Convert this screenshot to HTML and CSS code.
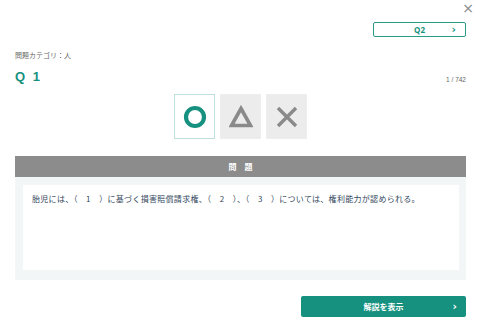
FILE: index.html
```html
<!DOCTYPE html>
<html lang="ja">

<head>
    <meta charset="UTF-8">
    <meta name="viewport" content="width=device-width, initial-scale=1.0">
    <title>問題</title>
    <link rel="stylesheet" href="styles.css">
</head>

<body>
    <div class="modal">
        <div class="close-row">
            <span class="close">&times;</span>
        </div>
        <div class="next-row">
            <a class="next-btn" href="#"><span>Q2</span><span class="chev">&rsaquo;</span></a>
        </div>
        <div class="category">問題カテゴリ：人</div>
        <div class="q-head">
            <h1>Q 1</h1>
            <span class="count">1 / 742</span>
        </div>

        <div class="answers">
            <button class="ans selected">
                <svg width="24" height="24" viewBox="0 0 24 24">
                    <circle cx="12" cy="12" r="9" fill="none" stroke="#17917f" stroke-width="4.2" />
                </svg>
            </button>
            <button class="ans">
                <svg width="24" height="24" viewBox="0 0 24 24">
                    <path d="M12 3.5 L21.5 20.5 H2.5 Z" fill="none" stroke="#8a8a8a" stroke-width="3.6" stroke-linejoin="miter" />
                </svg>
            </button>
            <button class="ans">
                <svg width="24" height="24" viewBox="0 0 24 24">
                    <path d="M3 3 L21 21 M21 3 L3 21" stroke="#8a8a8a" stroke-width="3.4" />
                </svg>
            </button>
        </div>

        <div class="question">
            <div class="q-title">問　題</div>
            <div class="q-body">
                <div class="q-text">胎児には、（　1　）に基づく損害賠償請求権、（　2　）、（　3　）については、権利能力が認められる。</div>
            </div>
        </div>

        <div class="footer">
            <a class="explain-btn" href="#"><span>解説を表示</span><span class="chev">&rsaquo;</span></a>
        </div>
    </div>
</body>

</html>
```

FILE: styles.css
```css
body {
    margin: 0;
    font-family: "Noto Sans CJK JP", "Noto Sans", sans-serif;
    background-color: #fff;
    color: #555;
}

.modal {
    width: 451px;
    padding: 0 14px 0 15px;
}

.close-row {
    display: flex;
    justify-content: flex-end;
    height: 22px;
}

.close {
    font-family: "DejaVu Sans", sans-serif;
    font-size: 14px;
    line-height: 16px;
    color: #888;
    margin-right: -8px;
}

.next-row {
    display: flex;
    justify-content: flex-end;
}

.next-btn {
    width: 91px;
    height: 13px;
    border: 1px solid #2a9a88;
    border-radius: 2px;
    display: flex;
    align-items: center;
    justify-content: center;
    position: relative;
    text-decoration: none;
    color: #17917f;
    font-family: "Open Sans", sans-serif;
    font-weight: 700;
    font-size: 8px;
}

.chev {
    position: absolute;
    right: 9px;
    top: 50%;
    transform: translateY(-54%);
    font-family: "DejaVu Sans", sans-serif;
    font-weight: 700;
    font-size: 11px;
}

.category {
    margin-top: 13px;
    font-size: 7px;
    line-height: 10px;
    color: #666;
}

.q-head {
    display: flex;
    justify-content: space-between;
    align-items: flex-end;
    margin-top: 9px;
}

.q-head h1 {
    margin: 0;
    font-family: "Liberation Sans", sans-serif;
    font-size: 13px;
    line-height: 16px;
    color: #17917f;
    letter-spacing: 2px;
}

.count {
    font-family: "Liberation Sans", sans-serif;
    font-size: 6.5px;
    color: #666;
    margin-bottom: 2px;
}

.answers {
    display: flex;
    justify-content: center;
    gap: 5px;
    margin-top: 9px;
}

.ans {
    width: 41px;
    height: 45px;
    padding: 0;
    border: 1px solid #eee;
    background: #ececec;
    display: flex;
    align-items: center;
    justify-content: center;
}

.ans.selected {
    background: #fff;
    border-color: #bfe0da;
}

.question {
    margin-top: 17px;
}

.q-title {
    height: 21px;
    line-height: 21px;
    background: #8c8c8c;
    color: #fff;
    text-align: center;
    font-size: 8px;
    font-weight: 700;
}

.q-body {
    background: #f2f6f6;
    padding: 8px 7px 10px 8px;
}

.q-text {
    background: #fff;
    height: 69px;
    padding: 8px 9px;
    font-size: 8px;
    line-height: 12px;
    letter-spacing: 0.3px;
    color: #34495e;
}

.footer {
    display: flex;
    justify-content: flex-end;
    margin-top: 16px;
}

.explain-btn {
    width: 165px;
    height: 21px;
    background: #17917f;
    border-radius: 2px;
    color: #fff;
    text-decoration: none;
    display: flex;
    align-items: center;
    justify-content: center;
    position: relative;
    font-size: 8px;
    font-weight: 700;
}
```
